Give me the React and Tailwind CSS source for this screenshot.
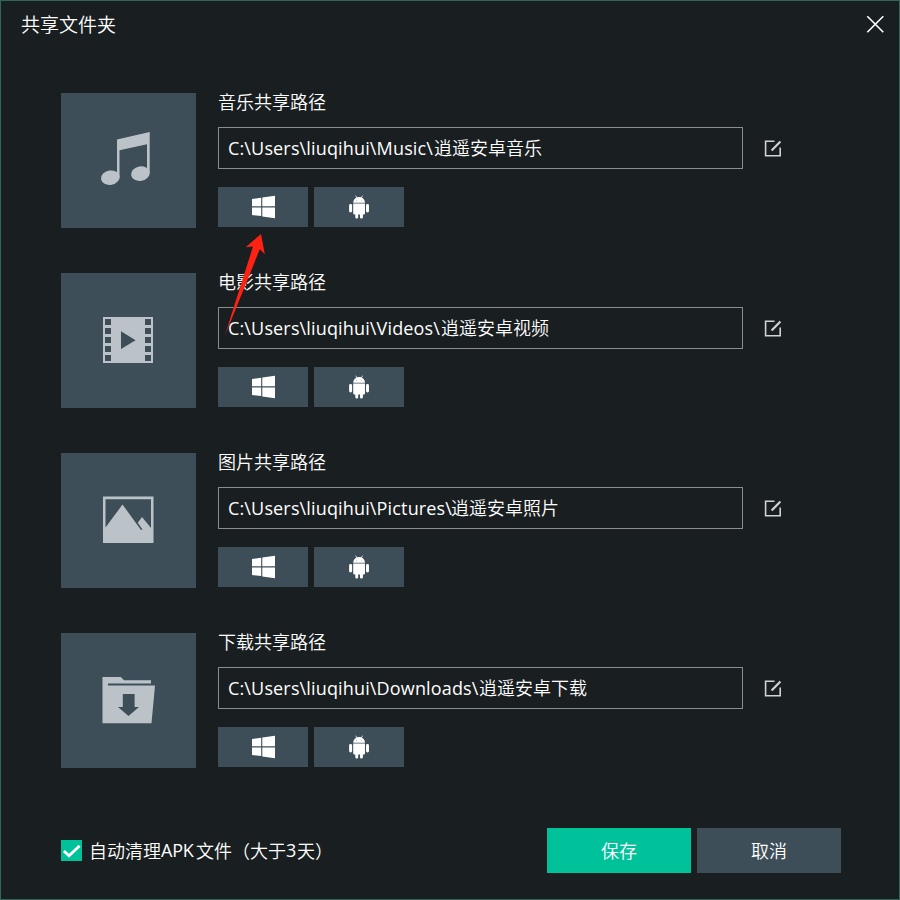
import React from "react";

const MusicIcon = () => (
  <svg width="135" height="135" viewBox="0 0 135 135" fill="#bcc3c8">
    <path d="M56 46.6 88.7 39V80H86V51.2L58.5 57.2V85H56Z" />
    <ellipse cx="49.3" cy="84.7" rx="9.4" ry="7.2" transform="rotate(-10 49.3 84.7)" />
    <ellipse cx="79.4" cy="80.6" rx="9.4" ry="7.2" transform="rotate(-10 79.4 80.6)" />
  </svg>
);

const FilmIcon = () => (
  <svg width="135" height="135" viewBox="0 0 135 135">
    <path d="M42 44H92V90H42Z" fill="#bcc3c8" />
    {[46, 55, 64, 73, 82].map((y) => (
      <g key={y} fill="#3d4e58">
        <rect x="44" y={y} width="6" height="6" />
        <rect x="84" y={y} width="6" height="6" />
      </g>
    ))}
    <path d="M60 58.3 74.6 67.2 60 76Z" fill="#3d4e58" />
  </svg>
);

const PictureIcon = () => (
  <svg width="135" height="135" viewBox="0 0 135 135">
    <path d="M42 43.5H92.5V90H42Z" fill="#bcc3c8" />
    <path
      d="M44.5 46.3H90V75L81 64 76.8 69.8 81.6 76.8H79.8L61.5 51.5 44.5 74.6Z"
      fill="#3d4e58"
    />
  </svg>
);

const FolderIcon = () => (
  <svg width="135" height="135" viewBox="0 0 135 135">
    <path
      d="M41.5 44H59.8L63 47.2H90V50.5H47V52.6H94L90.5 90.3H41.5Z"
      fill="#bcc3c8"
    />
    <path d="M61.8 61H73.6V74H78L67.5 83 57 74H61.8Z" fill="#3d4e58" />
  </svg>
);

const WindowsIcon = () => (
  <svg width="90" height="40" viewBox="0 0 90 40" fill="#fff">
    <path d="M34 12 43.2 10.7V19.2H34ZM44.3 10.5 57 8.8V19.2H44.3ZM34 20.4H43.2V29.1L34 27.9ZM44.3 20.4H57V31.2L44.3 29.4Z" />
  </svg>
);

const AndroidIcon = () => (
  <svg width="90" height="40" viewBox="0 0 90 40" fill="#fff">
    <path d="M39.2 15.7C39.4 13.3 40.6 11.5 42.4 10.5L41.2 8.8 41.7 8.5 43 10.2Q45 9.6 47.2 10.2L48.5 8.5 49 8.8 47.8 10.5C49.6 11.5 50.8 13.3 51 15.7Z" />
    <path d="M39.2 16.6H51V26.2Q51 27.4 49.8 27.4H48.9V30.2Q48.9 31.4 47.4 31.4T46 30.2V27.4H44.2V30.2Q44.2 31.4 42.7 31.4T41.3 30.2V27.4H40.4Q39.2 27.4 39.2 26.2Z" />
    <rect x="35.1" y="17" width="3" height="8.4" rx="1.4" />
    <rect x="52" y="17" width="3" height="8.4" rx="1.4" />
    <rect x="42" y="12.8" width="1" height="1" fill="#b6bec3" />
    <rect x="47.2" y="12.8" width="1" height="1" fill="#b6bec3" />
  </svg>
);

const EditIcon = () => (
  <svg width="20" height="20" viewBox="0 0 20 20" fill="none" stroke="#d0d2d3" strokeWidth="1.6">
    <path d="M11.5 2.3H2.6V16.8H17.2V8.5" />
    <path d="M8.6 11.6 17.4 2.6" strokeWidth="2.2" />
  </svg>
);

const rows = [
  { label: "音乐共享路径", path: "C:\\Users\\liuqihui\\Music\\", name: "逍遥安卓音乐", width: "w-[206px]", Icon: MusicIcon },
  { label: "电影共享路径", path: "C:\\Users\\liuqihui\\Videos\\", name: "逍遥安卓视频", width: "w-[213px]", Icon: FilmIcon },
  { label: "图片共享路径", path: "C:\\Users\\liuqihui\\Pictures\\", name: "逍遥安卓照片", width: "w-[223px]", Icon: PictureIcon },
  { label: "下载共享路径", path: "C:\\Users\\liuqihui\\Downloads\\", name: "逍遥安卓下载", width: "w-[251px]", Icon: FolderIcon },
];

const ShareRow = ({ label, path, name, width, Icon }) => (
  <section className="flex h-[135px]">
    <div className="h-[135px] w-[135px] shrink-0 bg-[#3d4e58]">
      <Icon />
    </div>
    <div className="ml-[22px] w-[525px]">
      <div className="h-[34px] text-[18px] leading-[17px]">{label}</div>
      <div className="flex h-[42px] items-center border border-[#8b8d8e] pl-[9px] text-[18px] leading-[40px] whitespace-nowrap">
        <span className={`${width} shrink-0 font-['Open_Sans'] font-normal tracking-[0.15px]`}>{path}</span>
        <span className="pb-[2px] leading-[38px]">{name}</span>
      </div>
      <div className="mt-[18px] flex gap-[6px]">
        <button className="h-10 w-[90px] bg-[#3d4e58]"><WindowsIcon /></button>
        <button className="h-10 w-[90px] bg-[#3d4e58]"><AndroidIcon /></button>
      </div>
    </div>
    <button className="mt-[46px] ml-[20px] h-5 w-5"><EditIcon /></button>
  </section>
);

export default function App() {
  return (
    <main className="relative flex h-[900px] w-[900px] flex-col overflow-hidden border border-[#2f6657] bg-[#191e20] font-['Noto_Sans_CJK_SC',sans-serif] font-[350] text-white">
      <header className="flex h-[92px] items-start justify-between pr-[15px] pl-5">
        <h1 className="mt-[9px] text-[19px] leading-[28px]">共享文件夹</h1>
        <button className="mt-[14px]">
          <svg width="18" height="18" viewBox="0 0 18 18" fill="none" stroke="#fff" strokeWidth="1.6">
            <path d="M1.3 1.3 17.3 17.3M17.3 1.3 1.3 17.3" />
          </svg>
        </button>
      </header>

      <div className="flex flex-col gap-[45px] pl-[60px]">
        {rows.map((row) => (
          <ShareRow key={row.label} {...row} />
        ))}
      </div>

      <footer className="mt-[59px] flex h-[46px] items-center justify-between pr-[58px] pl-[60px] text-[18px]">
        <label className="flex items-center">
          <svg width="21" height="21" viewBox="0 0 21 21">
            <rect width="21" height="21" fill="#00c29a" />
            <path d="M2.9 11 8 15.8 18.6 5.8" fill="none" stroke="#fff" strokeWidth="2.8" />
          </svg>
          <span className="ml-[7px] flex leading-[28px]">
            自动清理
            <span className="w-[35px] font-['Open_Sans'] font-normal tracking-[-0.2px]">APK</span>
            文件（大于
            <span className="w-[11px] font-['Open_Sans'] font-normal">3</span>
            天）
          </span>
        </label>
        <div className="flex gap-[6px]">
          <button className="h-[45px] w-[144px] bg-[#00c29a]">保存</button>
          <button className="h-[45px] w-[144px] bg-[#3d4e58]">取消</button>
        </div>
      </footer>

      <svg className="absolute top-[229px] left-[219px]" width="50" height="110" viewBox="0 0 50 110">
        <defs>
          <linearGradient id="tail" x1="0" y1="1" x2="0" y2="0">
            <stop offset="0" stopColor="#ff2113" stopOpacity="0.3" />
            <stop offset="0.15" stopColor="#ff2113" />
          </linearGradient>
        </defs>
        <path d="M41 4 44.8 24.2 39.8 19.2 4.2 107.5 33 16.5 25.7 17.3Z" fill="url(#tail)" />
      </svg>
    </main>
  );
}
